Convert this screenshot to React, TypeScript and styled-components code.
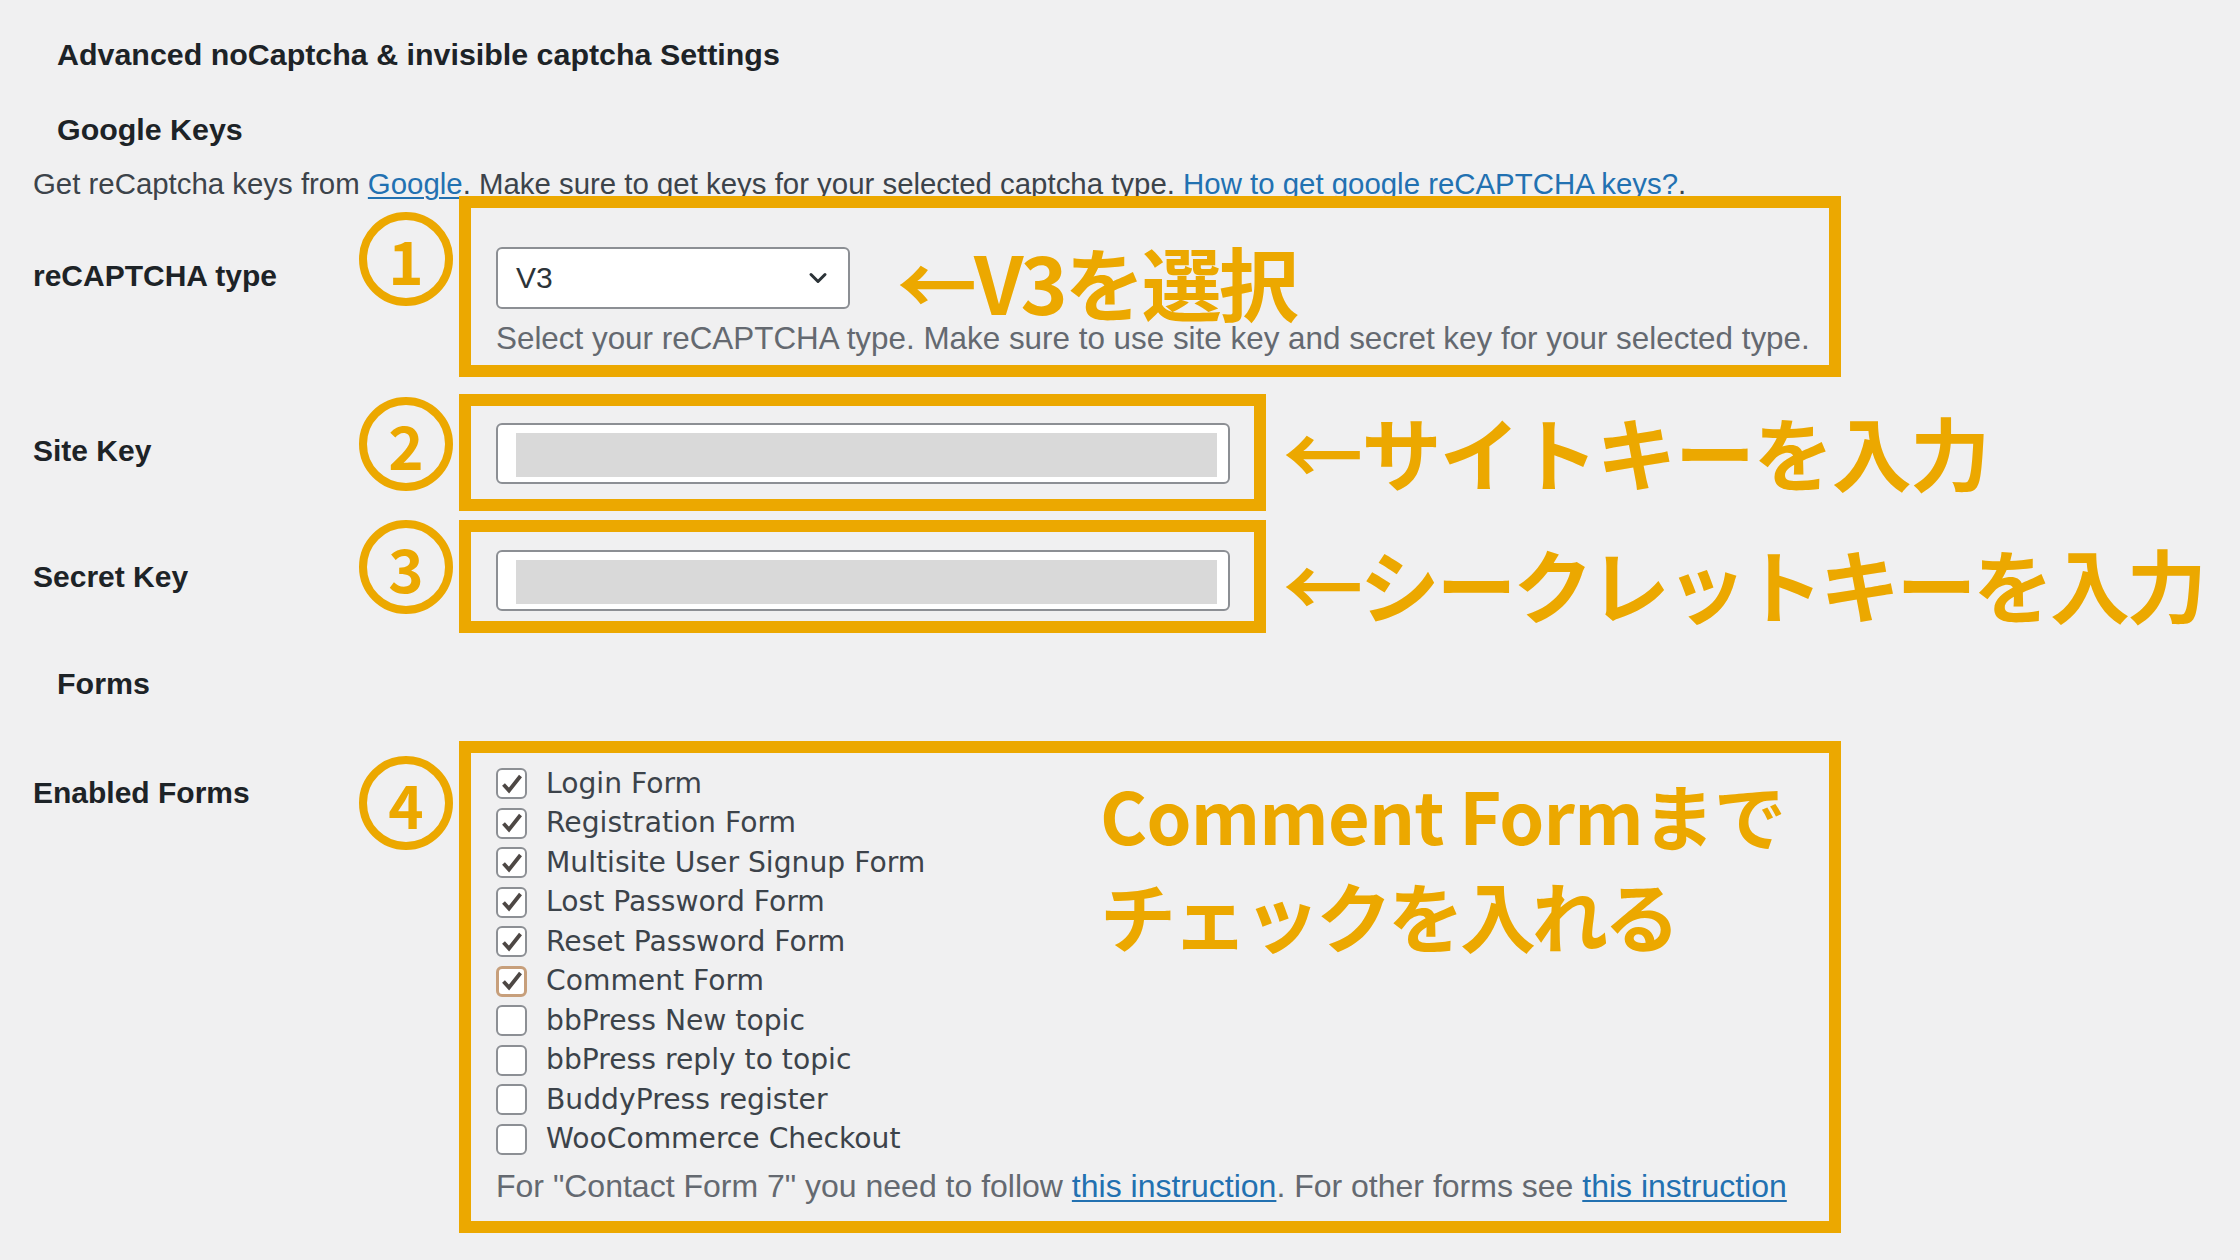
import React from "react";
import styled, { createGlobalStyle } from "styled-components";
import { ChevronDown } from "lucide-react";

const ORANGE = "#eca800";

const GlobalStyle = createGlobalStyle`
  html, body {
    margin: 0;
    padding: 0;
    background: #f0f0f1;
  }
  body {
    font-family: "Liberation Sans", Arial, sans-serif;
    color: #1d2327;
  }
`;

const Page = styled.div`
  width: 2240px;
  height: 1260px;
  box-sizing: border-box;
  padding: 36px 0 0 33px;
  overflow: hidden;
`;

const Heading = styled.h2<{ $top?: number }>`
  margin: ${(p) => p.$top || 0}px 0 0 24px;
  font-size: 30.4px;
  line-height: 36px;
  font-weight: 700;
  color: #1d2327;
`;

const Intro = styled.p`
  margin: 23px 0 -2px 0;
  font-size: 29.4px;
  line-height: 28px;
  color: #3c434a;
  white-space: nowrap;
`;

const Link = styled.a<{ $plain?: boolean }>`
  color: #2271b1;
  text-decoration: ${(p) => (p.$plain ? "none" : "underline")};
  text-decoration-thickness: 2px;
  text-underline-offset: 3px;
`;

const Row = styled.div<{ $top: number }>`
  display: flex;
  align-items: flex-start;
  margin-top: ${(p) => p.$top}px;
`;

const Label = styled.div<{ $offset: number }>`
  flex: none;
  width: 326px;
  margin-top: ${(p) => p.$offset}px;
  font-size: 30px;
  line-height: 36px;
  font-weight: 700;
  color: #1d2327;
`;

const Marker = styled.div<{ $offset: number }>`
  flex: none;
  width: 94px;
  height: 94px;
  box-sizing: border-box;
  margin-top: ${(p) => p.$offset}px;
  border: 8px solid ${ORANGE};
  border-radius: 50%;
  display: flex;
  align-items: center;
  justify-content: center;
  font-family: "Noto Sans CJK JP", "Noto Sans", sans-serif;
  font-weight: 700;
  font-size: 60px;
  line-height: 1;
  color: ${ORANGE};
`;

const Frame = styled.div<{ $width: number; $pad: string }>`
  flex: none;
  margin-left: 6px;
  width: ${(p) => p.$width}px;
  box-sizing: border-box;
  border: 12px solid ${ORANGE};
  padding: ${(p) => p.$pad};
`;

const SelectRow = styled.div`
  display: flex;
  align-items: flex-start;
  gap: 47px;
`;

const Select = styled.div`
  width: 354px;
  height: 62px;
  box-sizing: border-box;
  border: 2px solid #8c8f94;
  border-radius: 6px;
  background: #fff;
  display: flex;
  align-items: center;
  justify-content: space-between;
  padding: 0 16px 0 18px;
  font-size: 30px;
  color: #2c3338;
`;

const Note = styled.div<{ $size: number; $spacing: number; $line: number; $offset?: number }>`
  font-family: "Noto Sans CJK JP", "Noto Sans", sans-serif;
  font-weight: 700;
  color: ${ORANGE};
  font-size: ${(p) => p.$size}px;
  letter-spacing: ${(p) => p.$spacing}px;
  line-height: ${(p) => p.$line}px;
  margin-top: ${(p) => p.$offset || 0}px;
  white-space: nowrap;
`;

const InlineNote = styled(Note)`
  height: 62px;
`;

const Aside = styled(Note)`
  margin-left: 17px;
`;

const Help = styled.p`
  margin: 13px 0 0 0;
  font-size: 31.4px;
  line-height: 34px;
  color: #646970;
  white-space: nowrap;
`;

const Field = styled.div`
  height: 61px;
  box-sizing: border-box;
  border: 2px solid #8c8f94;
  border-radius: 6px;
  background: #fff;
  padding: 8px 11px 5px 18px;
`;

const Redacted = styled.div`
  height: 100%;
  background: #d9d9d9;
`;

const FormsGrid = styled.div`
  display: grid;
  grid-template-columns: 604px 1fr;
`;

const CheckList = styled.div`
  display: flex;
  flex-direction: column;
`;

const CheckRow = styled.label`
  display: flex;
  align-items: center;
  gap: 19px;
  height: 39.5px;
`;

const Box = styled.span<{ $focus?: boolean }>`
  flex: none;
  width: 31px;
  height: 31px;
  box-sizing: border-box;
  border: ${(p) => (p.$focus ? "3px solid #c79f7b" : "2px solid #8c8f94")};
  border-radius: 6px;
  background: #fff;
  display: flex;
  align-items: center;
  justify-content: center;
`;

const CheckText = styled.span`
  font-family: "DejaVu Sans", Verdana, sans-serif;
  font-size: 28.2px;
  line-height: 1;
  color: #3c434a;
  white-space: nowrap;
`;

const FootNote = styled.p`
  margin: 10px 0 0 0;
  font-size: 32px;
  line-height: 34px;
  color: #646970;
  white-space: nowrap;
`;

const Check = () => (
  <svg width="24" height="24" viewBox="0 0 24 24">
    <path
      d="M3.5 12.5 L9 18.5 L20.5 4"
      fill="none"
      stroke="#4d4744"
      strokeWidth="3.8"
      strokeLinejoin="miter"
    />
  </svg>
);

const forms = [
  { name: "Login Form", checked: true },
  { name: "Registration Form", checked: true },
  { name: "Multisite User Signup Form", checked: true },
  { name: "Lost Password Form", checked: true },
  { name: "Reset Password Form", checked: true },
  { name: "Comment Form", checked: true, focus: true },
  { name: "bbPress New topic", checked: false },
  { name: "bbPress reply to topic", checked: false },
  { name: "BuddyPress register", checked: false },
  { name: "WooCommerce Checkout", checked: false },
];

const App = () => {
  return (
    <>
      <GlobalStyle />
      <Page>
        <Heading>Advanced noCaptcha &amp; invisible captcha Settings</Heading>
        <Heading $top={39}>Google Keys</Heading>
        <Intro>
          Get reCaptcha keys from <Link>Google</Link>. Make sure to get keys for your selected
          captcha type. <Link $plain>How to get google reCAPTCHA keys?</Link>.
        </Intro>

        <Row $top={0}>
          <Label $offset={62}>reCAPTCHA type</Label>
          <Marker $offset={16}>1</Marker>
          <Frame $width={1382} $pad="39px 20px 9px 25px">
            <SelectRow>
              <Select>
                <span>V3</span>
                <ChevronDown size={28} strokeWidth={2.6} color="#2c3338" />
              </Select>
              <InlineNote $size={80} $spacing={-3} $line={66}>
                ←V3を選択
              </InlineNote>
            </SelectRow>
            <Help>
              Select your reCAPTCHA type. Make sure to use site key and secret key for your selected
              type.
            </Help>
          </Frame>
        </Row>

        <Row $top={17}>
          <Label $offset={39}>Site Key</Label>
          <Marker $offset={3}>2</Marker>
          <Frame $width={807} $pad="17px 24px 15px 25px">
            <Field>
              <Redacted />
            </Field>
          </Frame>
          <Aside $size={80} $spacing={-1.6} $line={80} $offset={16}>
            ←サイトキーを入力
          </Aside>
        </Row>

        <Row $top={9}>
          <Label $offset={39}>Secret Key</Label>
          <Marker $offset={0}>3</Marker>
          <Frame $width={807} $pad="18px 24px 10px 25px">
            <Field>
              <Redacted />
            </Field>
          </Frame>
          <Aside $size={80} $spacing={-3.3} $line={80} $offset={22}>
            ←シークレットキーを入力
          </Aside>
        </Row>

        <Heading $top={32}>Forms</Heading>

        <Row $top={40}>
          <Label $offset={34}>Enabled Forms</Label>
          <Marker $offset={15}>4</Marker>
          <Frame $width={1382} $pad="11px 20px 18px 25px">
            <FormsGrid>
              <CheckList>
                {forms.map((f) => (
                  <CheckRow key={f.name}>
                    <Box $focus={f.focus}>{f.checked && <Check />}</Box>
                    <CheckText>{f.name}</CheckText>
                  </CheckRow>
                ))}
              </CheckList>
              <div>
                <Note $size={72} $spacing={-0.8} $line={100}>
                  Comment Formまで
                </Note>
                <Note $size={76} $spacing={-4} $line={100}>
                  チェックを入れる
                </Note>
              </div>
            </FormsGrid>
            <FootNote>
              For "Contact Form 7" you need to follow <Link>this instruction</Link>. For other forms
              see <Link>this instruction</Link>
            </FootNote>
          </Frame>
        </Row>
      </Page>
    </>
  );
};

export default App;
